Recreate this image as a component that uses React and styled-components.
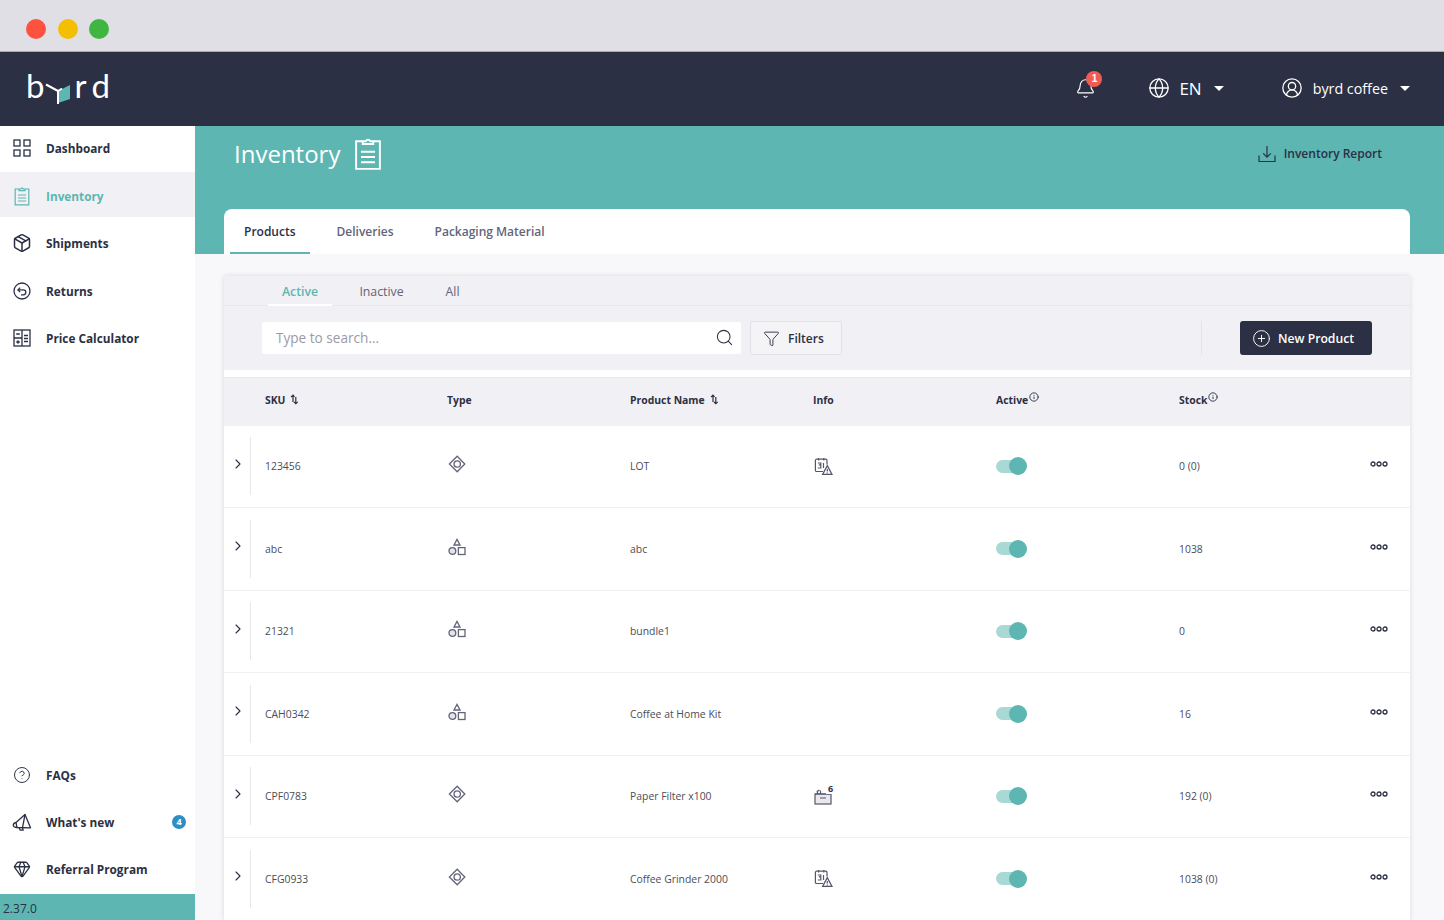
import styled, { createGlobalStyle } from 'styled-components';
import { Bell, ChevronRight, CirclePlus, CircleHelp, CircleUserRound, Funnel, Gem, Globe, Info, Package, Search } from 'lucide-react';

const dark = '#2b3044';
const teal = '#5db6b2';
const grey = '#4c4c58';

const GlobalStyle = createGlobalStyle`
  html, body {
    margin: 0;
    height: 920px;
    overflow: hidden;
    background: #f8f7f9;
    font-family: "Open Sans", "Noto Sans", sans-serif;
    color: ${dark};
  }
  * { box-sizing: border-box; }
`;

const Page = styled.div`
  display: flex;
  flex-direction: column;
  width: 1444px;
  height: 920px;
  overflow: hidden;
`;

const TitleBar = styled.div`
  display: flex;
  align-items: center;
  gap: 11.5px;
  flex: 0 0 52px;
  padding: 6px 0 0 26px;
  background: #e0dfe6;
  border-bottom: 1px solid #a9a9b6;
`;

const Light = styled.span`
  width: 20px;
  height: 20px;
  border-radius: 50%;
  background: ${p => p.$color};
`;

const Header = styled.header`
  display: flex;
  align-items: center;
  flex: 0 0 74px;
  padding: 0 34px 2px 26px;
  background: ${dark};
  color: #fff;
`;

const Logo = styled.div`
  display: flex;
  align-items: flex-start;
  height: 34px;
  margin-top: -2px;
`;

const LogoLetter = styled.span`
  font-family: "Lato", sans-serif;
  font-weight: 400;
  font-size: 33px;
  line-height: 30px;
  margin: 0 ${p => p.$gap || 0}px 0 ${p => p.$left || 0}px;
`;

const HeaderMenu = styled.div`
  display: flex;
  align-items: center;
  margin-left: ${p => p.$left}px;
  gap: ${p => p.$gap}px;
  font-size: ${p => p.$size}px;
`;

const BellWrap = styled.div`
  position: relative;
  display: flex;
  margin-left: auto;
`;

const RedBadge = styled.span`
  position: absolute;
  top: -7px;
  left: 11px;
  width: 16px;
  height: 16px;
  border-radius: 50%;
  background: #f25b52;
  color: #fff;
  font-family: "Liberation Sans", sans-serif;
  font-weight: 700;
  font-size: 10px;
  line-height: 16px;
  text-align: center;
`;

const Caret = styled.span`
  width: 0;
  height: 0;
  margin-left: ${p => p.$left}px;
  border-left: 5px solid transparent;
  border-right: 5px solid transparent;
  border-top: 5px solid #fff;
`;

const Body = styled.div`
  display: flex;
  flex: 1;
  min-height: 0;
`;

const Sidebar = styled.aside`
  display: flex;
  flex-direction: column;
  flex: 0 0 195px;
  background: #fff;
`;

const NavList = styled.nav`
  display: flex;
  flex-direction: column;
  margin-top: ${p => (p.$bottom ? 'auto' : '-1.5px')};
  margin-bottom: ${p => (p.$bottom ? '1.5px' : '0')};
`;

const NavItem = styled.a`
  position: relative;
  isolation: isolate;
  display: flex;
  align-items: center;
  gap: 14px;
  height: ${p => (p.$short ? '47px' : '47.5px')};
  padding-left: 12px;
  font-size: 11.8px;
  font-weight: 700;
  color: ${p => (p.$active ? teal : dark)};

  &::before {
    content: '';
    position: absolute;
    z-index: -1;
    inset: 0 0 2.5px 0;
    background: ${p => (p.$active ? '#f1f0f4' : 'transparent')};
  }
`;

const NavIcon = styled.span`
  display: flex;
  align-items: center;
  justify-content: center;
  width: 20px;
  height: 20px;
`;

const BlueBadge = styled.span`
  position: absolute;
  right: 9px;
  top: 16px;
  width: 14px;
  height: 14px;
  border-radius: 50%;
  background: #2f8fc4;
  color: #fff;
  font-size: 9px;
  font-weight: 700;
  line-height: 14px;
  text-align: center;
`;

const Version = styled.div`
  flex: 0 0 26px;
  padding: 6px 0 0 3px;
  background: ${teal};
  font-size: 12px;
  line-height: 18px;
  color: ${dark};
`;

const Main = styled.main`
  flex: 1;
  min-width: 0;
  background: #f8f7f9;
`;

const Hero = styled.div`
  display: flex;
  flex-direction: column;
  height: 128px;
  padding: 0 34px 0 29px;
  background: ${teal};
`;

const HeroTop = styled.div`
  display: flex;
  align-items: center;
  flex: 0 0 83px;
  padding: 0 28px 28px 10px;
  color: #fff;
`;

const HeroTitle = styled.h1`
  margin: 0 14px 0 0;
  font-size: 24px;
  font-weight: 400;
  line-height: 36px;
`;

const ReportLink = styled.a`
  display: flex;
  align-items: center;
  gap: 8px;
  margin-left: auto;
  font-size: 12px;
  font-weight: 600;
  color: ${dark};
`;

const TabCard = styled.div`
  display: flex;
  flex: 0 0 45px;
  padding-left: 6px;
  gap: 13px;
  background: #fff;
  border-radius: 8px 8px 0 0;
`;

const PageTab = styled.a`
  display: flex;
  align-items: center;
  padding: 2px 14px 0;
  height: 45px;
  font-size: 12px;
  font-weight: 600;
  color: ${p => (p.$active ? dark : '#63647a')};
  border-bottom: 2px solid ${p => (p.$active ? teal : 'transparent')};
`;

const Panel = styled.section`
  margin: 22px 34px 0 29px;
  background: #fff;
  box-shadow: 0 0 5px rgba(43, 48, 68, 0.14);
`;

const StatusTabs = styled.div`
  display: flex;
  height: 30px;
  padding-left: 44px;
  background: #f1f0f4;
  border-bottom: 1px solid #e8e7ec;
`;

const StatusTab = styled.a`
  display: flex;
  align-items: center;
  justify-content: center;
  width: ${p => p.$width}px;
  height: 30px;
  padding-top: 2px;
  font-size: 12.3px;
  font-weight: ${p => (p.$active ? 600 : 500)};
  color: ${p => (p.$active ? teal : '#63647a')};
  border-bottom: 2px solid ${p => (p.$active ? '#fff' : 'transparent')};
`;

const Toolbar = styled.div`
  display: flex;
  align-items: center;
  height: 64px;
  padding: 0 38px;
  background: #f1f0f4;
`;

const SearchBox = styled.div`
  display: flex;
  align-items: center;
  justify-content: space-between;
  width: 479px;
  height: 32px;
  padding: 0 7px 0 14px;
  background: #fff;
  border-radius: 2px;
  font-size: 13.6px;
  color: #9a9aa8;
  margin-bottom: 1px;
`;

const FilterButton = styled.button`
  display: flex;
  align-items: center;
  gap: 8px;
  width: 92px;
  height: 34px;
  margin-left: 9px;
  padding: 0 0 0 12px;
  background: #f4f3f6;
  border: 1px solid #e2e1e7;
  border-radius: 2px;
  font-family: inherit;
  font-size: 12px;
  font-weight: 600;
  color: ${dark};
`;

const Divider = styled.span`
  width: 1px;
  height: 34px;
  margin-left: auto;
  background: #e4e3e9;
`;

const NewButton = styled.button`
  display: flex;
  align-items: center;
  gap: 7px;
  width: 132px;
  height: 34px;
  margin-left: 38px;
  padding: 0 0 0 12px;
  background: ${dark};
  border: 0;
  border-radius: 3px;
  font-family: inherit;
  font-size: 12.2px;
  font-weight: 600;
  color: #fff;
`;

const WhiteStrip = styled.div`
  height: 7px;
  background: #fff;
`;

const columns = `
  display: grid;
  grid-template-columns: 40px repeat(6, 183px) 1fr;
  align-items: center;
`;

const HeadRow = styled.div`
  ${columns}
  height: 48.6px;
  padding-bottom: 4px;
  background: #f1f0f4;
  border-top: 1px solid #e8e7ec;
  font-size: 10.4px;
  font-weight: 700;
  color: ${dark};
`;

const HeadCell = styled.div`
  display: flex;
  align-items: center;
  gap: ${p => p.$gap || 0}px;
  grid-column: ${p => p.$col};
  padding-left: ${p => p.$left || 0}px;
`;

const Sup = styled.span`
  display: flex;
  margin: -6px 0 0 1px;
`;

const Row = styled.div`
  ${columns}
  height: 82.5px;
  background: #fff;
  border-bottom: 1px solid #f0eff3;
  font-size: 10.4px;
  color: ${grey};
`;

const SkuCell = styled.div`
  padding-left: 1px;
`;

const Expand = styled.div`
  display: flex;
  align-items: center;
  height: 58px;
  padding: 0 0 5px 6px;
  border-right: 1px solid #e8e7ec;
  width: 27px;
  color: ${dark};
`;

const IconCell = styled.div`
  display: flex;
  align-items: center;
  padding-bottom: ${p => p.$up || 0}px;
  padding-left: ${p => p.$left || 0}px;
`;

const Track = styled.div`
  position: relative;
  width: 24px;
  height: 13px;
  border-radius: 7px;
  background: #a9d9d5;
`;

const Knob = styled.span`
  position: absolute;
  left: 13px;
  top: -2.5px;
  width: 18px;
  height: 18px;
  border-radius: 50%;
  background: ${teal};
`;

const BoxIcon = styled.div`
  position: relative;
  display: flex;
`;

const BoxCount = styled.span`
  position: absolute;
  left: 12px;
  top: -4px;
  padding: 0 2px;
  background: #fff;
  font-size: 9px;
  font-weight: 700;
  line-height: 11px;
  color: ${dark};
`;

const DashIcon = () => (
  <svg width="18" height="18" viewBox="0 0 18 18" fill="none" stroke={dark} strokeWidth="1.3">
    <rect x="1" y="1" width="6" height="6" /><rect x="11" y="1" width="6" height="6" />
    <rect x="1" y="11" width="6" height="6" /><rect x="11" y="11" width="6" height="6" />
  </svg>
);

const ClipIcon = ({ size = 16, height = 20, color = teal, width = 1.2 }) => (
  <svg width={size} height={height} viewBox="0 0 16 20" fill="none" stroke={color} strokeWidth={width}>
    <path d="M5 3H1.200v15.800h13.600V3H11" />
    <path d="M5 4.600V3h1.700a1.400 1.400 0 0 1 2.600 0H11v1.600z" />
    <path d="M4 9h8M4 12h8M4 15h8" />
  </svg>
);

const ReturnIcon = () => (
  <svg width="18" height="18" viewBox="0 0 18 18" fill="none" stroke={dark} strokeWidth="1.3">
    <circle cx="9" cy="9" r="8" />
    <path d="M7.200 5.600 4.900 7.900l2.300 2.100" />
    <path d="M5 7.900h5.400a2.400 2.400 0 0 1 0 4.900H8" />
  </svg>
);

const CalcIcon = () => (
  <svg width="18" height="18" viewBox="0 0 18 18" fill="none" stroke={dark} strokeWidth="1.3">
    <rect x="1" y="1" width="16" height="16" />
    <path d="M9 1v16M1 9h8M3.200 5h3.600M3.200 13h3.600M5 11.200v3.600M11 6.500h4M11 9.500h4M11 12.500h4" />
  </svg>
);

const HornIcon = () => (
  <svg width="20" height="18" viewBox="0 0 20 18" fill="none" stroke={dark} strokeWidth="1.3" strokeLinejoin="round">
    <path d="M4 9.500 13 1.500l5.500 13.300L5 14.500z" />
    <path d="M4 9.500c-1.500.3-2.800 1.300-2.700 2.800.1 1.300 1.400 2.200 3.700 2.200" />
    <path d="M7 14.600l1.200 2.600h3l-.8-2.500" />
    <path d="M13 1.500 10.500 14.700" />
  </svg>
);

const TrayIcon = () => (
  <svg width="18" height="18" viewBox="0 0 18 18" fill="none" stroke={dark} strokeWidth="1.2">
    <path d="M1 10.500v6h16v-6" />
    <path d="M9 1v11M5.200 8.400 9 12.200l3.800-3.800" />
  </svg>
);

const SortIcon = () => (
  <svg width="9" height="11" viewBox="0 0 9 11" fill="none" stroke={dark} strokeWidth="1.2">
    <path d="M3 8V1.400M1 3.200l2-2 1.500 1.600M5.800 3v6.600M3.900 7.800l1.900 1.900 1.900-1.900" />
  </svg>
);

const LotIcon = () => (
  <svg width="18" height="18" viewBox="0 0 18 18" fill="none" stroke="#63647a" strokeWidth="1.300">
    <path d="M9.200 1.200 16.800 9l-7.600 7.800L1.400 9z" />
    <circle cx="9.200" cy="9" r="3.200" />
  </svg>
);

const BundleIcon = () => (
  <svg width="18" height="18" viewBox="0 0 18 18" fill="none" stroke="#63647a" strokeWidth="1.300">
    <path d="M9 1.400 12 7H6z" />
    <circle cx="4.400" cy="13" r="3.400" fill="#e4e3e9" />
    <rect x="10.400" y="9.600" width="6.600" height="6.900" />
  </svg>
);

const ExpiryIcon = () => (
  <svg width="19" height="19" viewBox="0 0 19 19" fill="none" stroke="#55566a" strokeWidth="1.200">
    <path d="M9 14.500H2.600a1.200 1.200 0 0 1-1.200-1.200V3.400a1.200 1.200 0 0 1 1.200-1.200h9.200a1.200 1.200 0 0 1 1.200 1.200v4" />
    <path d="M4.600 1v2.400M9.800 1v2.400" />
    <path d="M3.800 6h3v1.900H4.800M6.800 7.900V11h-3M9.500 6v5" />
    <path d="M13.300 8.600 18 17.400H8.600z" />
    <path d="M13.300 12v2.600M13.300 15.600v.8" />
  </svg>
);

const PackIcon = () => (
  <svg width="18" height="18" viewBox="0 0 18 18" fill="none" stroke="#55566a" strokeWidth="1.200">
    <rect x="1" y="7" width="16" height="10" fill="#e9e8ed" />
    <path d="M1 7h16M6 11h6M3.500 7V3.500M6.500 7V3.500M2.500 5l3-2" />
  </svg>
);

const MoreIcon = () => (
  <svg width="18" height="6" viewBox="0 0 18 6" fill="none" stroke={dark} strokeWidth="1.300">
    <circle cx="3" cy="3" r="2" /><circle cx="9" cy="3" r="2" /><circle cx="15" cy="3" r="2" />
  </svg>
);

const topNav = [
  { label: 'Dashboard', icon: <DashIcon /> },
  { label: 'Inventory', icon: <ClipIcon />, active: true },
  { label: 'Shipments', icon: <Package size={20} strokeWidth={1.800} color={dark} /> },
  { label: 'Returns', icon: <ReturnIcon /> },
  { label: 'Price Calculator', icon: <CalcIcon /> },
];

const products = [
  { sku: '123456', type: 'lot', name: 'LOT', info: 'expiry', stock: '0 (0)' },
  { sku: 'abc', type: 'bundle', name: 'abc', stock: '1038' },
  { sku: '21321', type: 'bundle', name: 'bundle1', stock: '0' },
  { sku: 'CAH0342', type: 'bundle', name: 'Coffee at Home Kit', stock: '16' },
  { sku: 'CPF0783', type: 'lot', name: 'Paper Filter x100', info: 'box', stock: '192 (0)' },
  { sku: 'CFG0933', type: 'lot', name: 'Coffee Grinder 2000', info: 'expiry', stock: '1038 (0)' },
];

function App() {
  return (
    <Page>
      <GlobalStyle />
      <TitleBar>
        <Light $color="#fd5240" />
        <Light $color="#f4bf00" />
        <Light $color="#3fb63f" />
      </TitleBar>
      <Header>
        <Logo>
          <LogoLetter $gap={1}>b</LogoLetter>
          <svg width="26" height="34" viewBox="0 0 26 34" fill="none">
            <path d="M13 21v12l12-4V15z" fill={teal} />
            <path d="M1 14.500 13 21l4-2.500M13 21v13" stroke="#fff" strokeWidth="2" />
          </svg>
          <LogoLetter $left={3} $gap={5}>r</LogoLetter>
          <LogoLetter>d</LogoLetter>
        </Logo>
        <BellWrap>
          <Bell size={21} strokeWidth={1.300} color="#fff" />
          <RedBadge>1</RedBadge>
        </BellWrap>
        <HeaderMenu $left={52} $gap={9} $size={17}>
          <Globe size={22} strokeWidth={1.400} color="#fff" />
          EN
          <Caret $left={3} />
        </HeaderMenu>
        <HeaderMenu $left={57} $gap={10} $size={14.3}>
          <CircleUserRound size={22} strokeWidth={1.400} color="#fff" />
          byrd coffee
          <Caret $left={2} />
        </HeaderMenu>
      </Header>
      <Body>
        <Sidebar>
          <NavList>
            {topNav.map(item => (
              <NavItem key={item.label} $active={item.active}>
                <NavIcon>{item.icon}</NavIcon>
                {item.label}
              </NavItem>
            ))}
          </NavList>
          <NavList $bottom>
            <NavItem $short><NavIcon><CircleHelp size={18} strokeWidth={1.300} color={dark} /></NavIcon>FAQs</NavItem>
            <NavItem $short><NavIcon><HornIcon /></NavIcon>What's new<BlueBadge>4</BlueBadge></NavItem>
            <NavItem $short><NavIcon><Gem size={18} strokeWidth={1.700} color={dark} /></NavIcon>Referral Program</NavItem>
          </NavList>
          <Version>2.37.0</Version>
        </Sidebar>
        <Main>
          <Hero>
            <HeroTop>
              <HeroTitle>Inventory</HeroTitle>
              <ClipIcon size={28} height={35} color="#fff" width={1.100} />
              <ReportLink><TrayIcon />Inventory Report</ReportLink>
            </HeroTop>
            <TabCard>
              <PageTab $active>Products</PageTab>
              <PageTab>Deliveries</PageTab>
              <PageTab>Packaging Material</PageTab>
            </TabCard>
          </Hero>
          <Panel>
            <StatusTabs>
              <StatusTab $active $width={64}>Active</StatusTab>
              <StatusTab $width={99}>Inactive</StatusTab>
              <StatusTab $width={43}>All</StatusTab>
            </StatusTabs>
            <Toolbar>
              <SearchBox>
                Type to search...
                <Search size={19} strokeWidth={1.300} color={dark} />
              </SearchBox>
              <FilterButton><Funnel size={17} strokeWidth={1.300} color={dark} />Filters</FilterButton>
              <Divider />
              <NewButton><CirclePlus size={19} strokeWidth={1.200} color="#fff" />New Product</NewButton>
            </Toolbar>
            <WhiteStrip />
            <HeadRow>
              <HeadCell $col={2} $gap={5} $left={1}>SKU <SortIcon /></HeadCell>
              <HeadCell $col={3}>Type</HeadCell>
              <HeadCell $col={4} $gap={5}>Product Name <SortIcon /></HeadCell>
              <HeadCell $col={5}>Info</HeadCell>
              <HeadCell $col={6}>Active<Sup><Info size={10} strokeWidth={2.200} color={dark} /></Sup></HeadCell>
              <HeadCell $col={7}>Stock<Sup><Info size={10} strokeWidth={2.200} color={dark} /></Sup></HeadCell>
            </HeadRow>
            {products.map(product => (
              <Row key={product.sku}>
                <Expand><ChevronRight size={16} strokeWidth={1.700} /></Expand>
                <SkuCell>{product.sku}</SkuCell>
                <IconCell $up={4} $left={1}>{product.type === 'lot' ? <LotIcon /> : <BundleIcon />}</IconCell>
                <div>{product.name}</div>
                <IconCell $left={1}>
                  {product.info === 'expiry' && <ExpiryIcon />}
                  {product.info === 'box' && <BoxIcon><PackIcon /><BoxCount>6</BoxCount></BoxIcon>}
                </IconCell>
                <div><Track><Knob /></Track></div>
                <div>{product.stock}</div>
                <IconCell $up={4} $left={8}><MoreIcon /></IconCell>
              </Row>
            ))}
          </Panel>
        </Main>
      </Body>
    </Page>
  );
}

export default App;
